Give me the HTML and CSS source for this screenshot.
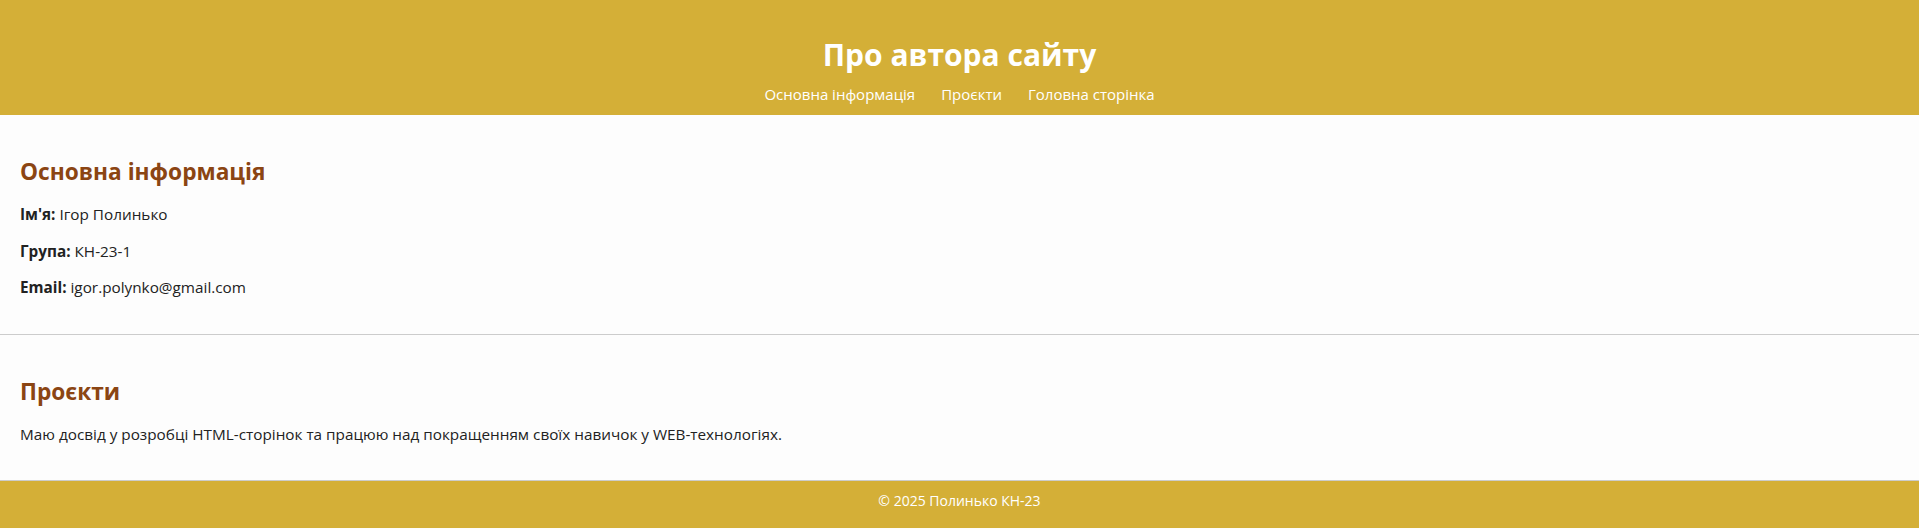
FILE: index.html
```html
<!DOCTYPE html>
<html lang="uk">
<head>
<meta charset="utf-8">
<title>Про автора сайту</title>
<link rel="stylesheet" href="styles.css">
</head>
<body>
<header class="site-header">
  <h1 class="site-title">Про автора сайту</h1>
  <nav class="site-nav">
    <a href="#info">Основна інформація</a>
    <a href="#projects">Проєкти</a>
    <a href="#">Головна сторінка</a>
  </nav>
</header>
<main>
  <section class="block" id="info">
    <h2 class="block-title">Основна інформація</h2>
    <p class="line"><strong>Ім'я:</strong> Ігор Полинько</p>
    <p class="line"><strong>Група:</strong> КН-23-1</p>
    <p class="line"><strong>Email:</strong> igor.polynko@gmail.com</p>
  </section>
  <section class="block" id="projects">
    <h2 class="block-title">Проєкти</h2>
    <p class="line">Маю досвід у розробці HTML-сторінок та працюю над покращенням своїх навичок у WEB-технологіях.</p>
  </section>
</main>
<footer class="site-footer">
  <p class="copy">© 2025 Полинько КН-23</p>
</footer>
</body>
</html>
```
FILE: styles.css
```css
html, body {
  margin: 0;
  padding: 0;
}
body {
  font-family: "Open Sans", "Noto Sans", sans-serif;
  background: #fdfdfd;
  color: #222;
}
.site-header {
  background: #d4af37;
  color: #fff;
  display: flex;
  flex-direction: column;
  align-items: center;
  padding: 35px 20px 10px;
}
.site-title {
  margin: 0;
  font-size: 30px;
  font-weight: 700;
  line-height: 40px;
}
.site-nav {
  display: flex;
  gap: 26px;
  margin-top: 8px;
}
.site-nav a {
  color: #fff;
  text-decoration: none;
  font-size: 15px;
  line-height: 22px;
}
.block {
  padding: 20px;
  border-bottom: 1px solid #ccc;
}
.block-title {
  color: #8b4513;
  font-size: 22.7px;
  margin: 22px 0 17px;
  line-height: 30px;
}
.line {
  margin: 16px 0;
  font-size: 15.3px;
  line-height: 20.5px;
}
.site-footer {
  background: #d4af37;
  color: #fff;
  text-align: center;
  padding: 9px 0 17px;
}
.copy {
  margin: 0;
  font-size: 14px;
  line-height: 21px;
}
```
